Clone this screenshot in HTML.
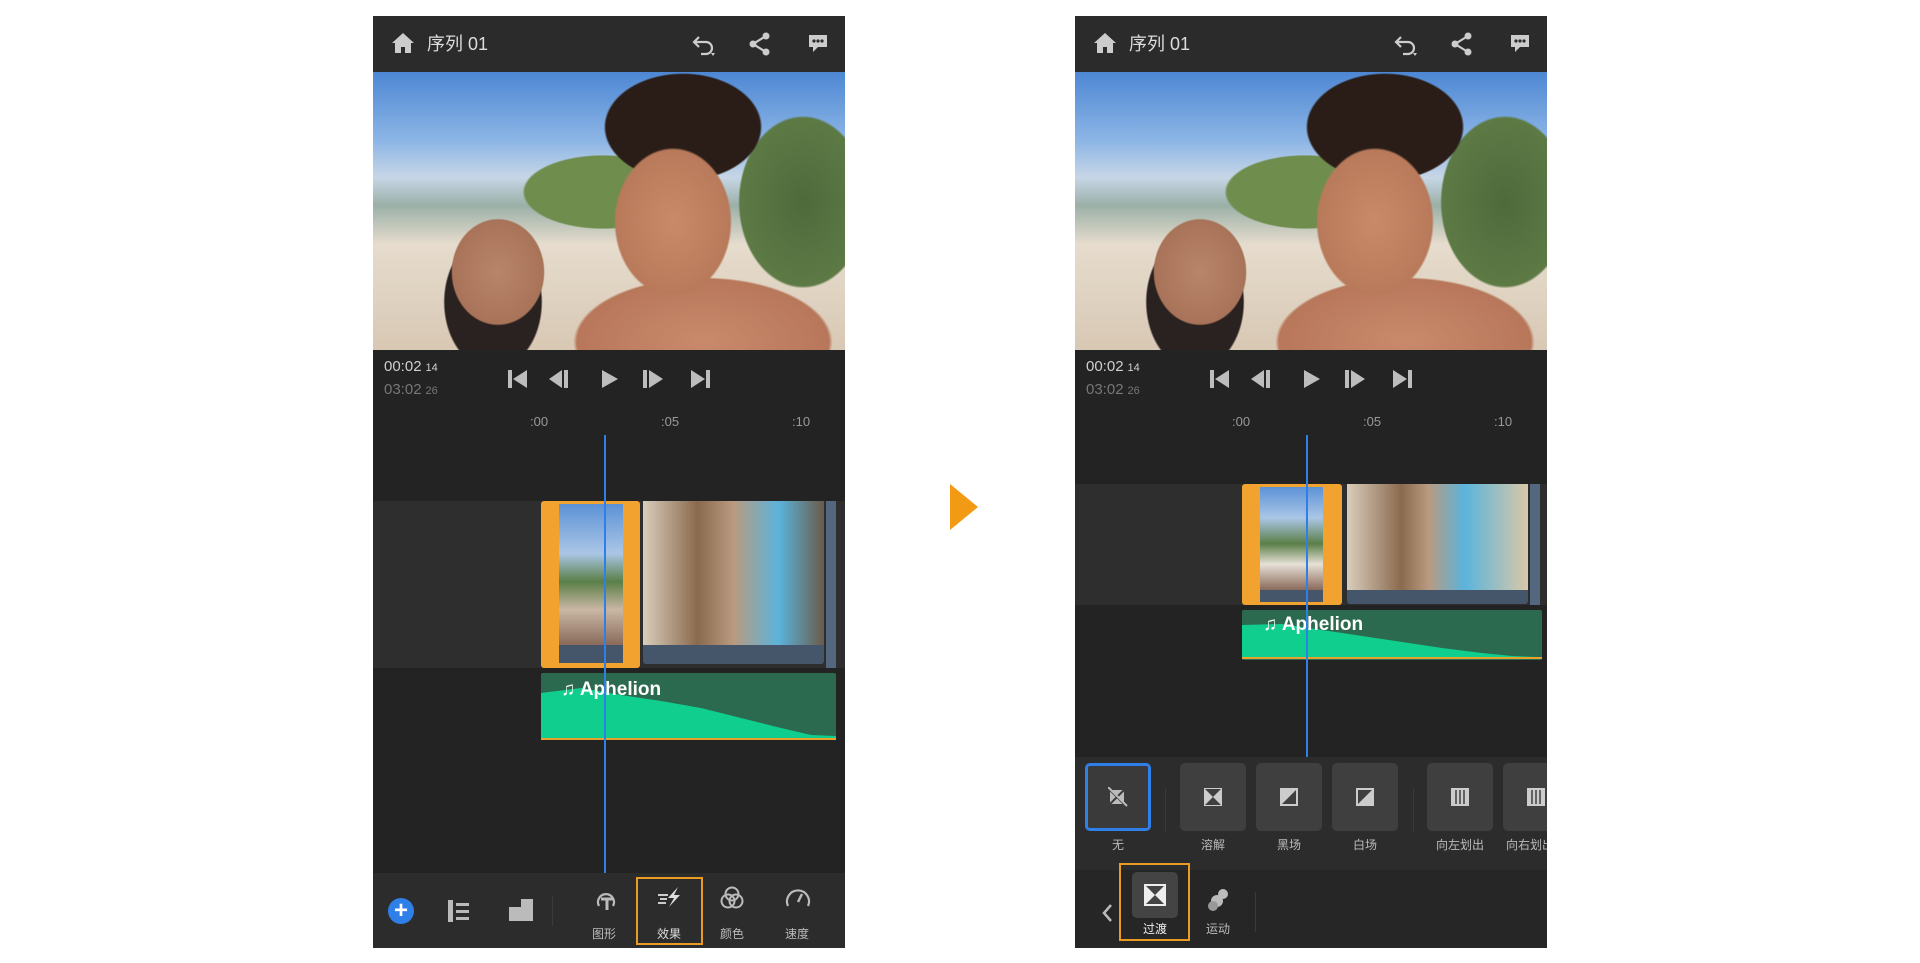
<!DOCTYPE html>
<html><head><meta charset="utf-8">
<style>
*{margin:0;padding:0;box-sizing:border-box}
body{width:1920px;height:963px;background:#fff;position:relative;overflow:hidden;font-family:"Liberation Sans","Noto Sans CJK SC",sans-serif}
.ph{position:absolute;top:16px;width:472px;height:932px;background:#232323;overflow:hidden}
.a{position:absolute}
.hdr{left:0;top:0;width:472px;height:56px;background:#2b2b2b}
.title{left:54px;top:14px;color:#ddd;font-size:18px}
.video{left:0;top:56px;width:472px;height:278px;overflow:hidden;
background:
radial-gradient(ellipse 95px 120px at 300px 150px,#c88a68 0,#b87a5a 60%,transparent 62%),
radial-gradient(ellipse 110px 75px at 310px 55px,#2a1d17 0,#2a1d17 70%,transparent 72%),
radial-gradient(ellipse 180px 90px at 330px 270px,#c98a6c 0,#b8775a 70%,transparent 72%),
radial-gradient(ellipse 70px 80px at 125px 200px,#b9856a 0,#a87358 65%,transparent 67%),
radial-gradient(ellipse 80px 110px at 120px 230px,#2a2220 0,#2a2220 60%,transparent 62%),
radial-gradient(ellipse 90px 120px at 430px 130px,#4e6a3c 0,#5d7a45 70%,transparent 72%),
radial-gradient(ellipse 130px 60px at 230px 120px,#6f8e4e 0,#6f8e4e 60%,transparent 62%),
linear-gradient(180deg,#4d87d4 0,#8db6e6 25%,#c7d6e6 38%,#9bb0a8 48%,#e6dccd 62%,#d8c8b4 100%)}
.tc1{left:11px;top:342px;color:#cfcfcf;font-size:15px}
.tc2{left:11px;top:365px;color:#777;font-size:15px}
.tc1 small,.tc2 small{font-size:11px;margin-left:4px}
.ru{top:398px;color:#999;font-size:13px}
.ph svg{position:absolute}
.band{background:#2e2e2e}
.clip{background:#f1a22f;border-radius:3px}
.wave{background:#45566b}
.play{background:#2f7fe8;width:2px}
.tb{background:#2c2c2c}
.lbl{color:#bbb;font-size:12px;text-align:center;width:60px}
.tile{background:#3f3f3f;border-radius:5px;width:66px;height:68px}
</style></head><body>

<!-- LEFT PHONE -->
<div class="ph" style="left:373px">
 <div class="a hdr"></div>
 <svg style="left:18px;top:16px" width="24" height="22" viewBox="0 0 24 22"><path d="M12 1 L1 11 H4 V21 H10 V15 H14 V21 H20 V11 H23 Z" fill="#ccc"/></svg>
 <div class="a title">序列 01</div>
 <svg style="left:318px;top:18px" width="26" height="24" viewBox="0 0 26 24"><path d="M8 3 L3 8 L8 13 M3 8 H15 A6 6 0 0 1 15 20 H10" fill="none" stroke="#ccc" stroke-width="2.2"/><path d="M20 19 l2 3 l2 -3z" fill="#ccc"/></svg>
 <svg style="left:376px;top:16px" width="22" height="24" viewBox="0 0 22 24"><circle cx="17" cy="4" r="3.5" fill="#ccc"/><circle cx="4" cy="12" r="3.5" fill="#ccc"/><circle cx="17" cy="20" r="3.5" fill="#ccc"/><path d="M17 4 L4 12 L17 20" stroke="#ccc" stroke-width="2.2" fill="none"/></svg>
 <svg style="left:434px;top:17px" width="22" height="22" viewBox="0 0 22 22"><path d="M2 2 H20 V14 H11 L6 19 V14 H2 Z" fill="#ccc"/><circle cx="7" cy="8" r="1.6" fill="#2b2b2b"/><circle cx="11" cy="8" r="1.6" fill="#2b2b2b"/><circle cx="15" cy="8" r="1.6" fill="#2b2b2b"/></svg>
 <div class="a video"></div>
 <div class="a tc1">00:02<small>14</small></div>
 <div class="a tc2">03:02<small>26</small></div>
 <svg style="left:133px;top:352px" width="210" height="22" viewBox="0 0 210 22">
  <g fill="#bdbdbd">
  <rect x="2" y="2" width="4" height="18"/><path d="M21 2 V20 L7 11Z"/>
  <path d="M56 2 V20 L43 11Z"/><rect x="58" y="2" width="4" height="18"/>
  <path d="M96 2 V20 L112 11Z"/>
  <rect x="137" y="2" width="4" height="18"/><path d="M143 2 V20 L157 11Z"/>
  <path d="M185 2 V20 L199 11Z"/><rect x="200" y="2" width="4" height="18"/>
  </g></svg>
 <div class="a ru" style="left:157px">:00</div>
 <div class="a ru" style="left:288px">:05</div>
 <div class="a ru" style="left:419px">:10</div>
 <div class="a band" style="left:0;top:485px;width:472px;height:167px"></div>
 <div class="a clip" style="left:168px;top:485px;width:99px;height:167px"></div>
 <div class="a" style="left:186px;top:488px;width:64px;height:141px;background:linear-gradient(180deg,#5c92d6 0,#aac6e6 35%,#5b7f48 55%,#c9b7a4 75%,#8a6a5a 100%)"></div>
 <div class="a wave" style="left:186px;top:629px;width:64px;height:18px"></div>
 <div class="a" style="left:270px;top:485px;width:181px;height:144px;background:linear-gradient(90deg,#d9cdbb 0,#8a6a4e 30%,#b99a80 50%,#5bb4dc 75%,#6a5a4a 100%)"></div>
 <div class="a wave" style="left:270px;top:629px;width:181px;height:19px;border-radius:0 0 3px 3px"></div>
 <div class="a" style="left:453px;top:485px;width:10px;height:167px;background:#53677e"></div>
 <svg style="left:168px;top:657px" width="295" height="67"><rect width="295" height="67" fill="#2b6a4e" rx="2"/><polygon points="0,65 0,20 40,15 80,22 120,28 160,35 200,45 240,55 270,62 295,63 295,65" fill="#10cf8e"/><rect y="65" width="295" height="2" fill="#e9a12e"/></svg>
 <div class="a" style="left:188px;top:663px;color:#fff;font-weight:bold;font-size:19px">♫ Aphelion</div>
 <div class="a play" style="left:231px;top:419px;height:438px"></div>
 <div class="a tb" style="left:0;top:857px;width:472px;height:75px"></div>
 <div class="a" style="left:15px;top:882px;width:26px;height:26px;border-radius:50%;background:#2f7fe8;color:#fff;font-size:24px;line-height:25px;text-align:center;font-weight:bold">+</div>
 <svg style="left:75px;top:884px" width="22" height="22"><rect x="0" y="0" width="5" height="22" fill="#bbb"/><rect x="8" y="3" width="13" height="3" fill="#bbb"/><rect x="8" y="10" width="13" height="3" fill="#bbb"/><rect x="8" y="17" width="13" height="3" fill="#bbb"/></svg>
 <svg style="left:136px;top:881px" width="26" height="26"><rect x="0" y="10" width="16" height="14" fill="#bbb"/><rect x="12" y="2" width="12" height="22" fill="#bbb"/></svg>
 <div class="a" style="left:179px;top:880px;width:1px;height:30px;background:#3a3a3a"></div>
 <svg style="left:220px;top:870px" width="26" height="26"><path d="M6 20 A8 8 0 1 1 20 20" fill="none" stroke="#bbb" stroke-width="2.2"/><path d="M8 13 H20 M14 13 V24" stroke="#bbb" stroke-width="3"/></svg>
 <div class="a lbl" style="left:201px;top:909px">图形</div>
 <div class="a" style="left:263px;top:861px;width:67px;height:68px;border:2px solid #e99b22"></div>
 <svg style="left:283px;top:870px" width="26" height="22"><path d="M2 9 H12 M4 13 H11 M2 17 H10" stroke="#ccc" stroke-width="2"/><path d="M22 1 L12 12 H18 L13 21 L24 9 H18 Z" fill="#ddd"/></svg>
 <div class="a lbl" style="left:266px;top:909px;color:#ddd">效果</div>
 <svg style="left:346px;top:869px" width="26" height="26"><g fill="none" stroke="#bbb" stroke-width="2"><circle cx="13" cy="9" r="6.5"/><circle cx="9" cy="16" r="6.5"/><circle cx="17" cy="16" r="6.5"/></g></svg>
 <div class="a lbl" style="left:329px;top:909px">颜色</div>
 <svg style="left:411px;top:869px" width="28" height="26"><path d="M4 21 A11 11 0 1 1 24 21" fill="none" stroke="#bbb" stroke-width="2.2"/><path d="M14 17 L18 9" stroke="#bbb" stroke-width="2.5"/></svg>
 <div class="a lbl" style="left:394px;top:909px">速度</div>
</div>

<!-- ARROW -->
<svg style="position:absolute;left:950px;top:484px" width="30" height="46"><path d="M0 0 L28 23 L0 46Z" fill="#f29a14"/></svg>

<!-- RIGHT PHONE -->
<div class="ph" style="left:1075px">
 <div class="a hdr"></div>
 <svg style="left:18px;top:16px" width="24" height="22" viewBox="0 0 24 22"><path d="M12 1 L1 11 H4 V21 H10 V15 H14 V21 H20 V11 H23 Z" fill="#ccc"/></svg>
 <div class="a title">序列 01</div>
 <svg style="left:318px;top:18px" width="26" height="24" viewBox="0 0 26 24"><path d="M8 3 L3 8 L8 13 M3 8 H15 A6 6 0 0 1 15 20 H10" fill="none" stroke="#ccc" stroke-width="2.2"/><path d="M20 19 l2 3 l2 -3z" fill="#ccc"/></svg>
 <svg style="left:376px;top:16px" width="22" height="24" viewBox="0 0 22 24"><circle cx="17" cy="4" r="3.5" fill="#ccc"/><circle cx="4" cy="12" r="3.5" fill="#ccc"/><circle cx="17" cy="20" r="3.5" fill="#ccc"/><path d="M17 4 L4 12 L17 20" stroke="#ccc" stroke-width="2.2" fill="none"/></svg>
 <svg style="left:434px;top:17px" width="22" height="22" viewBox="0 0 22 22"><path d="M2 2 H20 V14 H11 L6 19 V14 H2 Z" fill="#ccc"/><circle cx="7" cy="8" r="1.6" fill="#2b2b2b"/><circle cx="11" cy="8" r="1.6" fill="#2b2b2b"/><circle cx="15" cy="8" r="1.6" fill="#2b2b2b"/></svg>
 <div class="a video"></div>
 <div class="a tc1">00:02<small>14</small></div>
 <div class="a tc2">03:02<small>26</small></div>
 <svg style="left:133px;top:352px" width="210" height="22" viewBox="0 0 210 22">
  <g fill="#bdbdbd">
  <rect x="2" y="2" width="4" height="18"/><path d="M21 2 V20 L7 11Z"/>
  <path d="M56 2 V20 L43 11Z"/><rect x="58" y="2" width="4" height="18"/>
  <path d="M96 2 V20 L112 11Z"/>
  <rect x="137" y="2" width="4" height="18"/><path d="M143 2 V20 L157 11Z"/>
  <path d="M185 2 V20 L199 11Z"/><rect x="200" y="2" width="4" height="18"/>
  </g></svg>
 <div class="a ru" style="left:157px">:00</div>
 <div class="a ru" style="left:288px">:05</div>
 <div class="a ru" style="left:419px">:10</div>
 <div class="a band" style="left:0;top:468px;width:472px;height:121px"></div>
 <div class="a clip" style="left:167px;top:468px;width:100px;height:121px"></div>
 <div class="a" style="left:185px;top:471px;width:63px;height:103px;background:linear-gradient(180deg,#5c92d6 0,#aac6e6 30%,#5b7f48 55%,#e6e0d6 75%,#8a6a5a 100%)"></div>
 <div class="a wave" style="left:185px;top:574px;width:63px;height:12px"></div>
 <div class="a" style="left:272px;top:468px;width:181px;height:106px;background:linear-gradient(90deg,#d9cdbb 0,#8a6a4e 30%,#b99a80 45%,#5bb4dc 65%,#d9c8a8 100%)"></div>
 <div class="a wave" style="left:272px;top:574px;width:181px;height:14px;border-radius:0 0 3px 3px"></div>
 <div class="a" style="left:455px;top:468px;width:10px;height:121px;background:#53677e"></div>
 <svg style="left:167px;top:594px" width="300" height="50"><rect width="300" height="50" fill="#2b6a4e" rx="2"/><polygon points="0,48 0,15 40,14 80,20 120,26 160,32 200,38 240,43 270,46 295,47 300,48" fill="#10cf8e"/><rect y="47" width="300" height="2" fill="#e9a12e"/></svg>
 <div class="a" style="left:188px;top:598px;color:#fff;font-weight:bold;font-size:19px">♫ Aphelion</div>
 <div class="a play" style="left:231px;top:419px;height:322px"></div>
 <div class="a" style="left:0;top:741px;width:472px;height:113px;background:#2c2c2c"></div>
 <div class="a tile" style="left:10px;top:747px;border:3px solid #2f7fe8;background:#3a3a3a"></div>
 <svg style="left:33px;top:771px" width="20" height="20"><rect x="2" y="3" width="14" height="14" fill="#bbb"/><path d="M2 3 L16 17 M16 3 L2 17" stroke="#3a3a3a" stroke-width="2"/><path d="M0 0 L19 19" stroke="#bbb" stroke-width="2"/></svg>
 <div class="a lbl" style="left:13px;top:820px">无</div>
 <div class="a" style="left:90px;top:772px;width:1px;height:45px;background:#3a3a3a"></div>
 <div class="a tile" style="left:105px;top:747px"></div>
 <svg style="left:129px;top:772px" width="18" height="18"><rect width="18" height="18" fill="#ccc"/><path d="M1 1 L9 9 L17 1Z M1 17 L9 9 L17 17Z" fill="#3f3f3f"/></svg>
 <div class="a lbl" style="left:108px;top:820px">溶解</div>
 <div class="a tile" style="left:181px;top:747px"></div>
 <svg style="left:205px;top:772px" width="18" height="18"><rect width="18" height="18" fill="#ccc"/><path d="M2 16 L16 2 V16Z" fill="#3f3f3f"/></svg>
 <div class="a lbl" style="left:184px;top:820px">黑场</div>
 <div class="a tile" style="left:257px;top:747px"></div>
 <svg style="left:281px;top:772px" width="18" height="18"><rect width="18" height="18" fill="#ccc"/><path d="M2 16 L16 2 H2Z" fill="#3f3f3f"/></svg>
 <div class="a lbl" style="left:260px;top:820px">白场</div>
 <div class="a" style="left:338px;top:772px;width:1px;height:45px;background:#3a3a3a"></div>
 <div class="a tile" style="left:352px;top:747px"></div>
 <svg style="left:376px;top:772px" width="18" height="18"><rect width="18" height="18" fill="#ccc"/><path d="M5 2 V16 M9 2 V16 M13 2 V16" stroke="#3f3f3f" stroke-width="1.5"/></svg>
 <div class="a lbl" style="left:345px;top:820px;width:80px">向左划出</div>
 <div class="a tile" style="left:428px;top:747px"></div>
 <svg style="left:452px;top:772px" width="18" height="18"><rect width="18" height="18" fill="#ccc"/><path d="M5 2 V16 M9 2 V16 M13 2 V16" stroke="#3f3f3f" stroke-width="1.5"/></svg>
 <div class="a lbl" style="left:431px;top:820px;width:80px;text-align:left">向右划出</div>
 <div class="a" style="left:0;top:854px;width:472px;height:78px;background:#262626"></div>
 <svg style="left:26px;top:887px" width="12" height="20"><path d="M10 2 L3 10 L10 18" fill="none" stroke="#bbb" stroke-width="2.5"/></svg>
 <div class="a" style="left:44px;top:847px;width:71px;height:78px;border:2px solid #e99b22"></div>
 <div class="a" style="left:57px;top:856px;width:46px;height:46px;background:#444;border-radius:5px"></div>
 <svg style="left:69px;top:868px" width="22" height="22"><rect width="22" height="22" fill="#eee"/><path d="M2 2 L11 11 L20 2Z M2 20 L11 11 L20 20Z" fill="#444"/></svg>
 <div class="a lbl" style="left:50px;top:904px;color:#eee">过渡</div>
 <svg style="left:131px;top:872px" width="24" height="24"><circle cx="17" cy="6" r="5" fill="#bbb"/><circle cx="11" cy="13" r="6" fill="#bbb"/><circle cx="7" cy="18" r="5" fill="#999"/></svg>
 <div class="a lbl" style="left:113px;top:904px">运动</div>
 <div class="a" style="left:180px;top:876px;width:1px;height:40px;background:#3a3a3a"></div>
</div>
</body></html>
